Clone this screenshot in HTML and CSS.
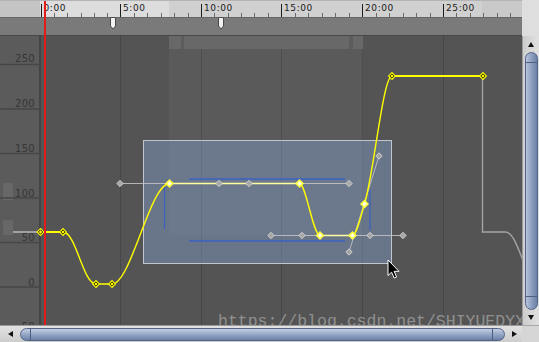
FILE: index.html
```html
<!DOCTYPE html>
<html lang="en">
<head>
    <meta charset="UTF-8">
    <title>curve editor</title>
    <link rel="stylesheet" href="styles.css">
</head>
<body>
    <div class="editor">
        <div class="head">
            <div class="head__bars">
                <svg class="ruler" viewBox="0 0 522 17" width="522" height="17">
                    <rect width="522" height="17" fill="#d0d0d0"/>
                    <rect width="40" height="17" fill="#c4c4c4"/>
                    <rect x="40" width="129" height="17" fill="#dddddd"/>
                    <rect x="482" width="40" height="17" fill="#c9c9c9"/>
                    <path d="M0 .5H522" stroke="#b4b4b4"/>
                    <path stroke="#1c1c1c" d="M41.5 4V17M120.5 4V17M201.5 4V17M281.5 4V17M362.5 4V17M443.5 4V17"/>
                    <path stroke="#6a6a6a" d="M54.5 13V17M67.5 13V17M81.5 13V17M94.5 13V17M107.5 13V17
                        M134.5 13V17M147.5 13V17M161.5 13V17M174.5 13V17M188.5 13V17
                        M214.5 13V17M228.5 13V17M241.5 13V17M254.5 13V17M268.5 13V17
                        M295.5 13V17M308.5 13V17M322.5 13V17M335.5 13V17M349.5 13V17
                        M376.5 13V17M389.5 13V17M403.5 13V17M416.5 13V17M430.5 13V17
                        M456.5 13V17M470.5 13V17M483.5 13V17M497.5 13V17M510.5 13V17"/>
                    <g class="ruler__text">
                        <text x="43.5" y="11">0:00</text>
                        <text x="123" y="11">5:00</text>
                        <text x="204" y="11">10:00</text>
                        <text x="284" y="11">15:00</text>
                        <text x="365" y="11">20:00</text>
                        <text x="446" y="11">25:00</text>
                    </g>
                </svg>
                <div class="events">
                    <svg class="marker marker--a" width="6" height="13" viewBox="0 0 6 13"><path d="M.5 .5h5v8.5l-2.5 3-2.5-3z" fill="#f2f2f2" stroke="#4a4a4a"/></svg>
                    <svg class="marker marker--b" width="6" height="13" viewBox="0 0 6 13"><path d="M.5 .5h5v8.5l-2.5 3-2.5-3z" fill="#f2f2f2" stroke="#4a4a4a"/></svg>
                </div>
            </div>
            <div class="corner"></div>
        </div>

        <div class="body">
            <div class="graph">
                <svg class="plot" viewBox="0 36 522 289" width="522" height="289">
                    <defs>
                        <g id="key">
                            <path d="M0 -4.2L4.2 0 0 4.2 -4.2 0Z" fill="#ffff00"/>
                            <path d="M0 -2.2L2.2 0 0 2.2 -2.2 0Z" fill="#ffff00" stroke="#262600" stroke-width="1"/>
                        </g>
                        <g id="skey">
                            <path d="M0 -4.5L4.5 0 0 4.5 -4.5 0Z" fill="#ffff40"/>
                            <path d="M0 -2.2L2.2 0 0 2.2 -2.2 0Z" fill="#fffff2"/>
                        </g>
                        <g id="hnd">
                            <path d="M0 -3.2L3.2 0 0 3.2 -3.2 0Z" fill="#a6a6a6" stroke="#dedede" stroke-width=".8"/>
                        </g>
                    </defs>

                    <rect x="0" y="36" width="522" height="289" fill="#545454"/>
                    <rect x="0" y="36" width="40" height="289" fill="#5b5b5b"/>
                    <rect x="3" y="183" width="10" height="17" fill="#676767"/>
                    <rect x="3" y="220" width="10" height="15" fill="#676767"/>

                    <!-- grid -->
                    <path stroke="#474747" d="M120.5 36V325M201.5 36V325M281.5 36V325M362.5 36V325M443.5 36V325"/>
                    <path stroke="#444" stroke-width="2" d="M40 36V325"/>
                    <path stroke="#474747" stroke-width="1.5" d="M0 64.5H40M0 109H40M0 153.5H40M0 198H40M0 242.5H40M0 287H40M0 331.5H40"/>
                    <g class="plot__labels">
                        <text x="35" y="62">250</text>
                        <text x="35" y="107">200</text>
                        <text x="35" y="151.5">150</text>
                        <text x="35" y="196.5">100</text>
                        <text x="35" y="241">50</text>
                        <text x="35" y="285.5">0</text>
                        <text x="35" y="330">-50</text>
                    </g>

                    <!-- faint range -->
                    <rect x="169" y="36" width="194" height="13" fill="#686868"/>
                    <rect x="181" y="36" width="3" height="13" fill="#5c5c5c"/>
                    <rect x="349" y="36" width="4" height="13" fill="#5c5c5c"/>
                    <rect x="169" y="49" width="194" height="186" fill="#ffffff" opacity=".035"/>

                    <!-- selection -->
                    <rect x="143.5" y="140.5" width="248" height="123" fill="rgba(140,172,222,.38)" stroke="#c0c6d0"/>
                    <path stroke="#3a62c4" stroke-width="1.6" fill="none" d="M189 179H345M189 241H345"/>
                    <path stroke="#3a62c4" stroke-width="1.2" fill="none" d="M164.5 187V229M370 190V230"/>

                    <!-- wrap -->
                    <path stroke="#a2a2a2" stroke-width="2" d="M13 232H40"/>
                    <path stroke="#a4a4a4" stroke-width="1.4" fill="none" d="M482.5 78V232H505.5C518.5 232 525.5 284 538.5 284"/>

                    <!-- tangents -->
                    <path stroke="#c6c6c6" stroke-opacity=".85" fill="none" d="M120 183.5H219M249 183.5H349M271 235.5H403M349 252L379 156"/>

                    <!-- curve -->
                    <g fill="none" stroke-linejoin="round">
                        <path stroke="#ffff00" stroke-width="2.2" d="M40.5 232H63M392 76H483"/>
                        <path stroke="#ffff00" stroke-width="1.4" d="M63 232C76 232 83 284 96 284H112C131 284 150 183.5 169.5 183.5"/>
                        <path stroke="#ffffa0" stroke-width="1.6" d="M169.5 183.5H299.5M320 235.5H352.5"/>
                        <path stroke="#ffff00" stroke-width="1.4" d="M299.5 183.5C306 183.5 313 235.5 320 235.5M352.5 235.5C356.5 235.5 360.5 217 364.5 204C373.7 174.5 383 76 392 76"/>
                    </g>

                    <use href="#hnd" x="120" y="183.5"/>
                    <use href="#hnd" x="219" y="183.5"/>
                    <use href="#hnd" x="249" y="183.5"/>
                    <use href="#hnd" x="349" y="183.5"/>
                    <use href="#hnd" x="271" y="235.5"/>
                    <use href="#hnd" x="302" y="235.5"/>
                    <use href="#hnd" x="370" y="235.5"/>
                    <use href="#hnd" x="403" y="235.5"/>
                    <use href="#hnd" x="349" y="252"/>
                    <use href="#hnd" x="379" y="156"/>

                    <use href="#key" x="40.5" y="232"/>
                    <use href="#key" x="63" y="232"/>
                    <use href="#key" x="96" y="284"/>
                    <use href="#key" x="112" y="284"/>
                    <use href="#key" x="392" y="76"/>
                    <use href="#key" x="483" y="76"/>
                    <use href="#skey" x="169.5" y="183.5"/>
                    <use href="#skey" x="299.5" y="183.5"/>
                    <use href="#skey" x="320" y="235.5"/>
                    <use href="#skey" x="352.5" y="235.5"/>
                    <use href="#skey" x="364.5" y="204"/>
                </svg>
                <svg class="cursor" width="13" height="21" viewBox="0 0 13 21">
                    <path d="M1 1V16.5L4.6 13.2 7.2 19 9.6 18 7.1 12.3H12Z" fill="#000" stroke="#fff" stroke-width="1"/>
                </svg>
                <span class="watermark">https://blog.csdn.net/SHIYUEDYX</span>
            </div>
            <div class="vscroll">
                <span class="arrow arrow--up"></span>
                <div class="vthumb"><i class="grip"></i><i class="grip"></i></div>
                <span class="arrow arrow--down"></span>
            </div>
        </div>

        <div class="foot">
            <div class="hscroll">
                <span class="arrow arrow--left"></span>
                <div class="hthumb"><i class="grip"></i><i class="grip"></i></div>
                <span class="arrow arrow--right"></span>
            </div>
            <div class="corner corner--foot"></div>
        </div>

        <div class="playhead"></div>
    </div>
</body>
</html>
```

FILE: styles.css
```css
body {
    margin:0;
    background:#fff;
}
.editor {
    position:relative;
    width:539px;
    height:342px;
    display:flex;
    flex-direction:column;
    overflow:hidden;
    font-family:"DejaVu Sans", sans-serif;
}
.head {
    display:flex;
    height:36px;
}
.head__bars {
    width:522px;
    display:flex;
    flex-direction:column;
}
.ruler {
    display:block;
}
.ruler__text {
    font-family:"DejaVu Sans", sans-serif;
    font-size:9px;
    letter-spacing:.6px;
    fill:#1a1a1a;
}
.events {
    position:relative;
    height:19px;
    box-sizing:border-box;
    background:#7a7a7a;
    border-top:1px solid #666;
    border-bottom:1px solid #474747;
}
.marker {
    position:absolute;
    top:-1px;
}
.marker--a { left:110px; }
.marker--b { left:218px; }
.corner {
    width:17px;
    background:#dedede;
}
.corner--foot {
    background:#d6d6d6;
    border-top:1px solid #a8a8a8;
    box-sizing:border-box;
}

.body {
    display:flex;
    height:289px;
}
.graph {
    position:relative;
    width:522px;
    overflow:hidden;
}
.plot {
    display:block;
}
.plot__labels {
    font-family:"DejaVu Sans", sans-serif;
    font-size:10px;
    letter-spacing:.3px;
    fill:#363636;
    text-anchor:end;
}
.cursor {
    position:absolute;
    left:387px;
    top:223px;
}
.watermark {
    position:absolute;
    left:218px;
    top:276px;
    font:16.5px/20px "Liberation Mono", monospace;
    color:rgba(255,255,255,.36);
    white-space:nowrap;
}
.playhead {
    position:absolute;
    left:44px;
    top:1px;
    width:2px;
    height:324px;
    background:#e21a1a;
}

/* scroll bars */
.vscroll {
    width:17px;
    box-sizing:border-box;
    border-left:1px solid #9c9c9c;
    background:linear-gradient(to right, #cdcdcd, #e0e0e0);
    display:flex;
    flex-direction:column;
    align-items:center;
}
.vthumb {
    margin-top:5px;
    width:13px;
    height:258px;
    box-sizing:border-box;
    border:1px solid #53648b;
    border-radius:7px;
    background:linear-gradient(to right, #b6c3da, #90a2c1 45%, #6b80a4);
    display:flex;
    flex-direction:column;
    justify-content:space-between;
    padding:9px 0 12px;
}
.vthumb .grip {
    height:1px;
    background:#4b5d82;
}
.foot {
    display:flex;
    height:17px;
}
.hscroll {
    width:522px;
    height:17px;
    box-sizing:border-box;
    border-top:1px solid #9a9a9a;
    background:linear-gradient(#e2e2e2, #cdcdcd);
    display:flex;
    align-items:center;
}
.hthumb {
    margin-left:7px;
    width:485px;
    height:13px;
    box-sizing:border-box;
    border:1px solid #53648b;
    border-radius:7px;
    background:linear-gradient(#c2cde0, #95a7c5 50%, #6b80a5);
    display:flex;
    justify-content:space-between;
    padding:0 11px 0 9px;
}
.hthumb .grip {
    width:1px;
    background:#4b5d82;
}
.arrow {
    width:0;
    height:0;
    border:0 solid transparent;
}
.arrow--up {
    margin-top:6px;
    border-width:0 3.5px 5px;
    border-bottom-color:#111;
}
.arrow--down {
    margin-top:5px;
    border-width:5px 3.5px 0;
    border-top-color:#111;
}
.arrow--left {
    margin-left:8px;
    border-width:3.5px 5px 3.5px 0;
    border-right-color:#111;
}
.arrow--right {
    margin-left:7px;
    border-width:3.5px 0 3.5px 5px;
    border-left-color:#111;
}
```
